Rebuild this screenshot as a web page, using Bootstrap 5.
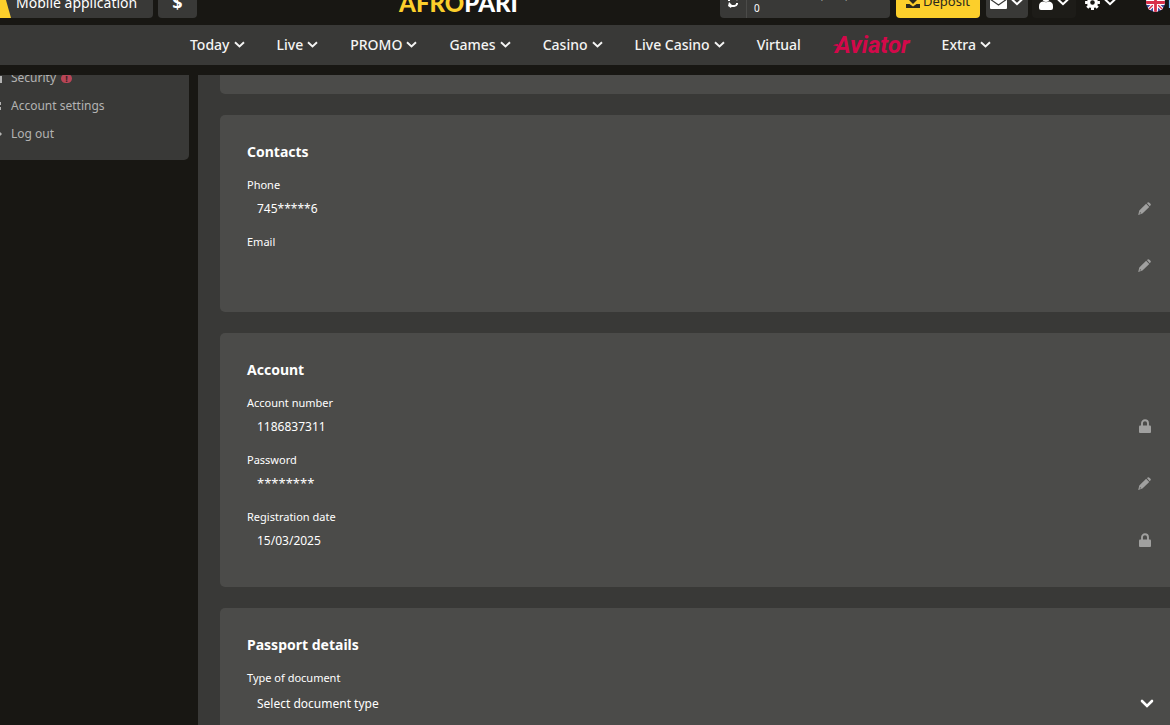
<!DOCTYPE html>
<html lang="en">
<head>
<meta charset="utf-8">
<meta name="viewport" content="width=device-width, initial-scale=1">
<title>AfroPari – Personal profile</title>
<link href="https://cdn.jsdelivr.net/npm/bootstrap@5.3.0/dist/css/bootstrap.min.css" rel="stylesheet">
<style>
  :root { --ink: #181713; --panel: #393937; --tile: #4b4b49; --brand: #fccf2b; }
  body { background: var(--ink); color: #fff; font-family: "Noto Sans", "Open Sans", sans-serif; font-size: 14px; height: 100vh; overflow: hidden; }
  a, button { color: inherit; }
  svg { display: block; flex: none; }

  /* top bar, scrolled partly out of view */
  .topbar { height: 25px; padding-bottom: 7px; overflow: hidden; }
  .bar-item { height: 32px; background: var(--panel); border: 0; border-radius: 4px; color: #fff; padding: 0; white-space: nowrap; }
  .app-link { width: 153px; gap: 5px; border-radius: 0 4px 4px 0; }
  .money { width: 39px; font-size: 18px; font-weight: 700; line-height: 20px; }
  .left-items { gap: 5px; }
  .brand-name { font-family: Lato, sans-serif; font-weight: 900; font-size: 24px; line-height: 30px; color: #fff; }
  .brand-name span { color: var(--brand); }
  .balance { width: 170px; }
  .balance-text { font-size: 10px; line-height: 13px; border-left: 1px solid #4b4b49; padding: 3px 7px; height: 32px; }
  .deposit { width: 84px; background: var(--brand); color: #2b2a1c; gap: 3px; margin: 0 6px; font-size: 13px; }
  .mail { width: 42px; gap: 4px; }
  .user { width: 44px; gap: 4px; background: #1d1c18; }
  .gear { width: 42px; gap: 4px; background: transparent; }
  .lang { background: transparent; width: 24px; gap: 3px; overflow: hidden; }

  .mainnav { background: var(--panel); height: 40px; padding-bottom: 2px; font-size: 14px; font-weight: 500; gap: 32px; padding-left: 11px; }
  .mainnav a { color: #f4f4f3; gap: 4px; white-space: nowrap; }
  .mainnav a.aviator { color: #d3084a; gap: 0; }
  .aviator { font-family: "Liberation Sans Narrow", Roboto, sans-serif; font-weight: 700; font-style: italic; font-size: 24px; line-height: 38px; padding-top: 2px; }
  .aviator svg { margin-right: -3px; }

  .page { padding-top: 10px; }
  .side { width: 189px; height: 85px; overflow: hidden; background: var(--panel); border-radius: 0 0 5px 0; padding-bottom: 12px; margin-right: 9px; }
  .side a { color: #b3b3b2; height: 28px; gap: 9px; font-size: 12px; flex: none; }
  .side a svg { width: 2px; }
  .alert-dot { width: 11px; height: 9px; border-radius: 5px; background: #b84556; color: #3a2024; font-size: 9px; font-weight: 700; line-height: 9px; margin-left: -4px; text-align: center; }

  .content { background: var(--panel); min-height: calc(100vh - 75px); padding-left: 22px; gap: 21px; }
  .tile { background: var(--tile); border-radius: 5px 0 0 5px; padding: 26px 19px 35px 27px; }
  .tile-end { height: 19px; padding: 0; border-top-left-radius: 0; }
  .tile h2 { font-size: 14px; font-weight: 700; line-height: 22px; margin-bottom: 11px; }
  .fields { gap: 11px; }
  .fields label { display: block; font-size: 11px; line-height: 22px; }
  .value, .value:focus { background: transparent; border: 0; outline: 0; color: #fff; font-size: 12px; height: 24px; padding: 0 10px; }
  .value.secret { font-size: 13px; }
  .icon-btn { background: none; border: 0; padding: 0; color: #a0a09f; }
  .doc-select { --bs-form-select-bg-img: url("data:image/svg+xml,%3csvg xmlns='http://www.w3.org/2000/svg' viewBox='0 0 14 10'%3e%3cpath d='M2 2l5 5 5-5' fill='none' stroke='white' stroke-width='2.6' stroke-linecap='round'/%3e%3c/svg%3e");
    background-color: transparent; background-size: 14px 10px; background-position: right 9px center; background-image: var(--bs-form-select-bg-img); border: 0; color: #fff; font-size: 12px; line-height: 20px; height: 30px; padding: 0 26px 0 10px; }
  .doc-row { margin-right: -12px; }
</style>
</head>
<body>
<svg width="0" height="0" class="position-absolute" aria-hidden="true">
  <symbol id="chev" viewBox="0 0 11 7"><path d="M1 1.200l4.500 4.300L10 1.200" fill="none" stroke="currentColor" stroke-width="1.900"/></symbol>
  <symbol id="pencil" viewBox="0 0 12 12"><path fill="currentColor" d="M8.200 1 9 .4q.8-.5 1.500.2l1 1q.7.800.1 1.500l-.8.9zM7.500 1.600l2.900 2.900-6.300 6.200L.2 12l1-4.200zM1.900 9.200l-.4 1.500 1.500-.4z"/></symbol>
  <symbol id="lock" viewBox="0 0 12 14"><path d="M3 7V4.200a3 3 0 0 1 6 0V7" fill="none" stroke="currentColor" stroke-width="1.900"/><rect y="6.500" width="12" height="7.500" rx="1" fill="currentColor"/></symbol>
</svg>

<header class="topbar d-flex align-items-end justify-content-between">
  <div class="left-items d-flex align-items-end">
    <a href="#" class="bar-item app-link d-flex align-items-center text-decoration-none">
      <svg width="11" height="32" viewBox="0 0 11 32"><path d="M0 0h2l9 32H0z" fill="#fccf2b"/></svg>Mobile application</a>
    <button class="bar-item money" type="button" aria-label="Payments">$</button>
  </div>
  <a href="#" class="brand-name text-decoration-none"><span>AFRO</span>PARI</a>
  <div class="d-flex align-items-end">
    <div class="bar-item balance d-flex align-items-center">
      <button class="icon-btn text-white px-2" type="button" aria-label="Refresh balance">
        <svg width="10" height="12" viewBox="0 0 10 12"><path d="M1 5V4a3 3 0 0 1 3-2h4M9 7v1a3 3 0 0 1-3 2H2" fill="none" stroke="currentColor" stroke-width="2"/><path d="M7 0l3 2-1 3zM3 12 0 10l1-4 3 3z" fill="currentColor"/></svg>
      </button>
      <div class="balance-text">Main account (MZN)<br>0</div>
    </div>
    <button class="bar-item deposit d-flex align-items-center justify-content-center" type="button">
      <svg width="14" height="14" viewBox="0 0 14 14"><path d="M5 0h4v4h3L7 9 2 4h3zM0 9h3.500L7 11.500 10.500 9H14v4H0z" fill="currentColor"/></svg>Deposit</button>
    <button class="bar-item mail d-flex align-items-center justify-content-center" type="button" aria-label="Messages">
      <svg width="17" height="13" viewBox="0 0 17 13"><rect width="17" height="13" rx="1" fill="#fff"/><path d="M0 3l8.500 6L17 3" fill="none" stroke="#393937" stroke-width="1.200"/></svg><svg width="12" height="8"><use href="#chev"/></svg></button>
    <button class="bar-item user d-flex align-items-center justify-content-center ms-1" type="button" aria-label="Profile">
      <svg width="14" height="15" viewBox="0 0 14 15"><circle cx="7" cy="3.500" r="3.500" fill="#fff"/><path d="M0 15v-4q0-4 4-4.500 3 1.500 6 0 4 .5 4 4.500v2q0 2-2 2H2q-2 0-2-2z" fill="#fff"/></svg><svg width="12" height="8"><use href="#chev"/></svg></button>
    <button class="bar-item gear d-flex align-items-center justify-content-center ms-1" type="button" aria-label="Settings">
      <svg width="15" height="15" viewBox="-7.500 -7.500 15 15"><circle r="3.900" fill="none" stroke="#fff" stroke-width="3.200"/><path d="M0-7.400V-5M0 5v2.400M-7.400 0H-5M5 0h2.400M-5.200-5.200l1.700 1.700M3.500 3.500l1.700 1.700M-5.200 5.200l1.700-1.700M3.500-3.500l1.700-1.700" stroke="#fff" stroke-width="3"/></svg><svg width="12" height="8"><use href="#chev"/></svg></button>
    <button class="bar-item lang d-flex align-items-center ms-4" type="button" aria-label="Language">
      <svg width="19" height="19" viewBox="0 0 19 19"><clipPath id="round"><circle cx="9.500" cy="9.500" r="9.500"/></clipPath><g clip-path="url(#round)"><path fill="#3f4a9c" d="M0 0h19v19H0z"/><path d="M0 0l19 19M19 0L0 19" stroke="#fff" stroke-width="3.600"/><path d="M0 0l19 19M19 0L0 19" stroke="#d8304a" stroke-width="1.400"/><path d="M9.500 0v19M0 9.500h19" stroke="#fff" stroke-width="5"/><path d="M9.500 0v19M0 9.500h19" stroke="#d8304a" stroke-width="2.800"/></g></svg>EN</button>
  </div>
</header>

<nav class="mainnav d-flex align-items-center justify-content-center">
  <a href="#" class="d-flex align-items-center text-decoration-none">Today<svg width="11" height="7"><use href="#chev"/></svg></a>
  <a href="#" class="d-flex align-items-center text-decoration-none">Live<svg width="11" height="7"><use href="#chev"/></svg></a>
  <a href="#" class="d-flex align-items-center text-decoration-none">PROMO<svg width="11" height="7"><use href="#chev"/></svg></a>
  <a href="#" class="d-flex align-items-center text-decoration-none">Games<svg width="11" height="7"><use href="#chev"/></svg></a>
  <a href="#" class="d-flex align-items-center text-decoration-none">Casino<svg width="11" height="7"><use href="#chev"/></svg></a>
  <a href="#" class="d-flex align-items-center text-decoration-none">Live Casino<svg width="11" height="7"><use href="#chev"/></svg></a>
  <a href="#" class="text-decoration-none">Virtual</a>
  <a href="#" class="aviator d-flex align-items-center text-decoration-none"><svg width="5" height="4" viewBox="0 0 5 4"><path d="M0 2.500Q2 .5 5 1v2.500Q2 2.500 0 2.500z" fill="currentColor"/></svg>Aviator</a>
  <a href="#" class="d-flex align-items-center text-decoration-none">Extra<svg width="11" height="7"><use href="#chev"/></svg></a>
</nav>

<div class="page d-flex align-items-start">
  <aside class="side d-flex flex-column justify-content-end flex-shrink-0">
    <a href="#" class="d-flex align-items-center text-decoration-none"><svg height="10" viewBox="0 0 2 10"><path d="M0 3h2v7H0z" fill="currentColor"/></svg>Security<span class="alert-dot">!</span></a>
    <a href="#" class="d-flex align-items-center text-decoration-none"><svg height="10" viewBox="0 0 2 10"><path d="M0 1h1v3H0zM0 6h1v3H0z" fill="currentColor"/></svg>Account settings</a>
    <a href="#" class="d-flex align-items-center text-decoration-none"><svg height="10" viewBox="0 0 2 10"><path d="M0 3l2 2-2 2z" fill="currentColor"/></svg>Log out</a>
  </aside>

  <main class="content d-flex flex-column flex-grow-1">
    <div class="tile tile-end"></div>

    <section class="tile">
      <h2>Contacts</h2>
      <div class="fields d-flex flex-column">
        <div><label for="phone">Phone</label>
          <div class="d-flex align-items-center"><input id="phone" class="value flex-grow-1" value="745*****6" readonly><button class="icon-btn" type="button" aria-label="Edit phone"><svg width="13" height="13"><use href="#pencil"/></svg></button></div></div>
        <div><label for="email">Email</label>
          <div class="d-flex align-items-center"><input id="email" class="value flex-grow-1" readonly><button class="icon-btn" type="button" aria-label="Edit email"><svg width="13" height="13"><use href="#pencil"/></svg></button></div></div>
      </div>
    </section>

    <section class="tile">
      <h2>Account</h2>
      <div class="fields d-flex flex-column">
        <div><label for="number">Account number</label>
          <div class="d-flex align-items-center"><input id="number" class="value flex-grow-1" value="1186837311" readonly><span class="icon-btn"><svg width="12" height="14"><use href="#lock"/></svg></span></div></div>
        <div><label for="pass">Password</label>
          <div class="d-flex align-items-center"><input id="pass" class="value secret flex-grow-1" value="********" readonly><button class="icon-btn" type="button" aria-label="Edit password"><svg width="13" height="13"><use href="#pencil"/></svg></button></div></div>
        <div><label for="date">Registration date</label>
          <div class="d-flex align-items-center"><input id="date" class="value flex-grow-1" value="15/03/2025" readonly><span class="icon-btn"><svg width="12" height="14"><use href="#lock"/></svg></span></div></div>
      </div>
    </section>

    <section class="tile">
      <h2>Passport details</h2>
      <div class="fields d-flex flex-column">
        <div class="doc-row"><label for="doc">Type of document</label>
          <select id="doc" class="form-select doc-select"><option>Select document type</option></select></div>
      </div>
    </section>
  </main>
</div>
<script src="https://cdn.jsdelivr.net/npm/bootstrap@5.3.0/dist/js/bootstrap.bundle.min.js"></script>
</body>
</html>
